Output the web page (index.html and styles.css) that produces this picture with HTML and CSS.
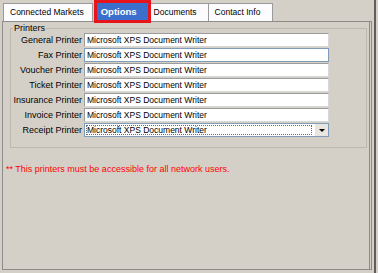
FILE: index.html
```html
<!DOCTYPE html>
<html>
<head>
  <title>Options</title>
  <meta name="viewport" content="width=device-width, initial-scale=1.0">
  <link rel="stylesheet" href="styles.css">
</head>
<body>
  <div class="window">
    <div class="tabs">
      <div class="tab tab-markets">Connected Markets</div>
      <div class="tab tab-options">Options</div>
      <div class="tab tab-documents">Documents</div>
      <div class="tab tab-contact">Contact Info</div>
    </div>

    <div class="panel">
      <fieldset class="group">
        <legend>Printers</legend>
        <div class="rows">
          <label>General Printer</label>
          <div class="field">Microsoft XPS Document Writer</div>

          <label>Fax Printer</label>
          <div class="field focused">Microsoft XPS Document Writer</div>

          <label>Voucher Printer</label>
          <div class="field">Microsoft XPS Document Writer</div>

          <label>Ticket Printer</label>
          <div class="field">Microsoft XPS Document Writer</div>

          <label>Insurance Printer</label>
          <div class="field">Microsoft XPS Document Writer</div>

          <label>Invoice Printer</label>
          <div class="field">Microsoft XPS Document Writer</div>

          <label>Receipt Printer</label>
          <div class="select">
            <span class="select-value">Microsoft XPS Document Writer</span>
            <span class="select-button"><span class="arrow"></span></span>
          </div>
        </div>
      </fieldset>

      <p class="note">** This printers must be accessible for all network users.</p>
    </div>
  </div>
  <div class="edge"></div>
</body>
</html>
```

FILE: styles.css
```css
body {
  margin: 0;
  height: 273px;
  overflow: hidden;
  display: flex;
  background: #d4d0c8;
  font-family: "Liberation Sans", Arial, sans-serif;
  font-size: 8.5px;
  color: #000;
}

.window {
  width: 370px;
  padding: 0 0 3px 2px;
  display: flex;
  flex-direction: column;
}

.edge {
  width: 2px;
  margin-left: 2px;
  background: #5e5e5e;
}

/* tabs */
.tabs {
  display: flex;
  height: 18px;
  padding-top: 3px;
  margin-left: 1px;
}

.tab {
  box-sizing: border-box;
  height: 18px;
  line-height: 17px;
  background: #fcfcfe;
  border: 1px solid #9a9a9a;
  border-bottom: none;
  white-space: nowrap;
}

.tab-markets {
  padding: 0 8px 0 6px;
}

.tab-options {
  position: relative;
  z-index: 1;
  margin-left: 1px;
  border: none;
  padding: 0 14px 0 7px;
  background: #3b6fcd;
  color: #fff;
  font-weight: bold;
  font-size: 9.5px;
  line-height: 18px;
}

.tab-options::after {
  content: "";
  position: absolute;
  top: -3px;
  bottom: -2px;
  left: 0;
  right: 0;
  border: 3px solid #e8141c;
}

.tab-documents {
  border-left: none;
  padding: 0 11px 0 3px;
}

.tab-contact {
  margin-left: -1px;
  padding: 0 12px 0 6px;
}

/* panel */
.panel {
  flex: 1;
  border: 1px solid #8c8c8c;
  border-right: 3px double #8c8c8c;
  padding-top: 2px;
}

.group {
  margin: 0 2px 0 7px;
  padding: 0 0 10px 0;
  border: 1px solid #bdb9b1;
}

.group legend {
  margin-left: 2px;
  padding: 0 1px;
  font-size: 9px;
  line-height: 9px;
}

.rows {
  display: grid;
  grid-template-columns: 71px 245px;
  column-gap: 2px;
  row-gap: 1px;
}

.rows label {
  text-align: right;
  font-size: 9px;
  line-height: 14px;
  white-space: nowrap;
}

.field {
  box-sizing: border-box;
  height: 14px;
  line-height: 12px;
  padding-left: 2px;
  background: #fff;
  border: 1px solid;
  border-color: #9c9c9c #d8d8d8 #d8d8d8 #9c9c9c;
  white-space: nowrap;
}

.field.focused {
  border-color: #7f9db9;
}

.select {
  box-sizing: border-box;
  height: 14px;
  display: flex;
  background: #fff;
  border: 1px solid #7f9db9;
}

.select-value {
  flex: 1;
  margin: 1px 2px 1px 1px;
  padding-left: 1px;
  line-height: 10px;
  outline: 1px dotted #6a6a6a;
  outline-offset: -1px;
  white-space: nowrap;
}

.select-button {
  width: 13px;
  display: flex;
  align-items: center;
  justify-content: center;
  background: #e9e6df;
  border-left: 1px solid #fff;
}

.arrow {
  width: 0;
  height: 0;
  border-left: 3px solid transparent;
  border-right: 3px solid transparent;
  border-top: 3px solid #000;
}

.note {
  margin: 16px 0 0 3px;
  font-size: 9px;
  line-height: 11px;
  color: #ff0000;
}
```
